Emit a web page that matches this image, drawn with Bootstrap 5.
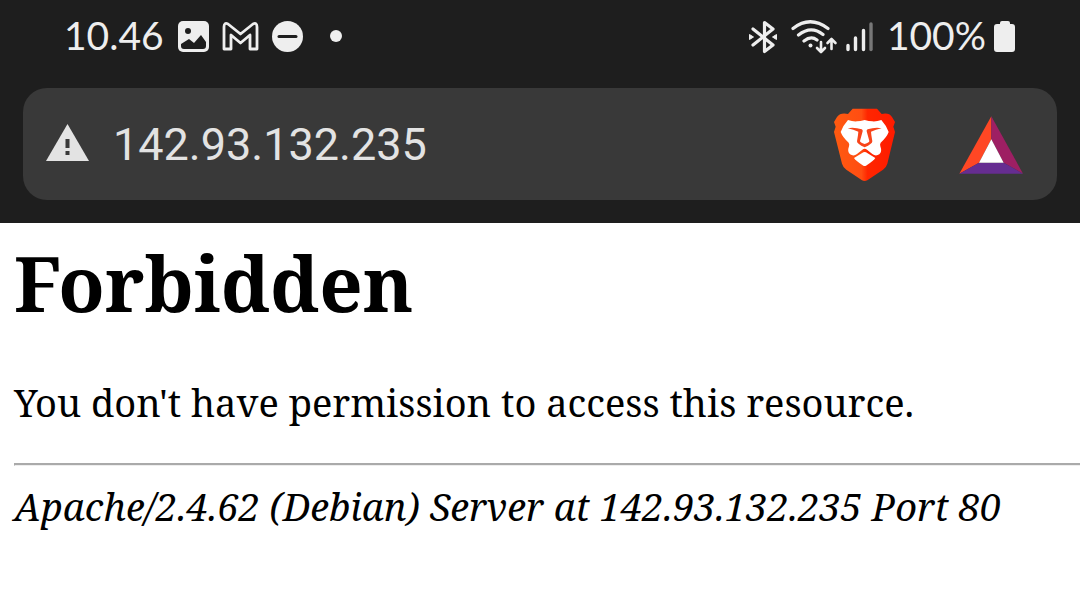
<!DOCTYPE html>
<html lang="en">
<head>
<meta charset="utf-8">
<meta name="viewport" content="width=device-width, initial-scale=1">
<title>403 Forbidden</title>
<link href="https://cdn.jsdelivr.net/npm/bootstrap@5.3.0/dist/css/bootstrap.min.css" rel="stylesheet">
<style>
  .chrome { background: #1e1e1e; padding-bottom: 23px; }
  .status { height: 88px; padding: 0 64px 14px; color: #eee; font: 400 39px/48px Lato, sans-serif; }
  .status svg { display: block; flex: none; }
  .clock { margin-right: 14px; }
  .omnibox { background: #393939; border-radius: 24px; height: 112px; margin: 0 23px; padding: 2px 34px 0 23px; }
  .address { font: 400 45px/56px Roboto, sans-serif; color: #e3e3e3; min-width: 0; margin-left: 23px; }
  .address:focus { outline: 0; }
  .tool { line-height: 0; }
  .tools { gap: 63px; }
  .page { font: 400 38px/52px "Noto Serif", "Droid Serif", "DejaVu Serif Condensed", "DejaVu Serif", serif; color: #000; padding: 8px 0 0 14px; }
  .page h1 { font: inherit; font-weight: 700; font-size: 76px; line-height: 104px; margin: 0 0 41px; }
  .page p { margin: 0 0 35px; }
  .page hr { margin: 0 0 14px; border: 0 solid #aaa; border-width: 2px 0 1px 1px; border-bottom-color: #eee; opacity: 1; height: 3px; }
</style>
</head>
<body class="bg-white">
<header class="chrome">
  <div class="status d-flex align-items-center justify-content-between">
    <div class="d-flex align-items-center">
      <span class="clock pb-1">10.46</span>
      <svg class="me-2" width="36" height="32" viewBox="0 0 36 32" aria-label="Picture"><rect width="31" height="31" rx="5" fill="#eee"/><circle cx="10" cy="10" r="3" fill="#1e1e1e"/><path d="M3 23v2q0 3 3 3h19q3 0 3-3v-4l-5-7-7 8-5-4z" fill="#1e1e1e"/></svg>
      <svg class="me-2" width="42" height="32" viewBox="0 0 42 32" aria-label="Mail" fill="none" stroke="#eee" stroke-width="2.8" stroke-linejoin="round"><path d="M2 28V6Q2 1 6 3L18.500 13 31 3q4-2 4 3v22h-7V14l-9.500 8L9 14v14z"/></svg>
      <svg width="32" height="32" viewBox="0 0 32 32" aria-label="Do not disturb"><circle cx="15.500" cy="15.500" r="15.500" fill="#eee"/><path d="M7 15.500h17" stroke="#1e1e1e" stroke-width="3" stroke-linecap="round"/></svg>
      <svg class="ms-4" width="16" height="32" viewBox="0 0 16 32" aria-hidden="true"><circle cx="8" cy="15" r="6" fill="#eee"/></svg>
    </div>
    <div class="d-flex align-items-center">
      <svg width="42" height="34" viewBox="749 20 42 34" aria-label="Bluetooth"><path d="M753 29l20 16-8.500 6.500V22.500L773 29l-20 16" fill="none" stroke="#eee" stroke-width="3.200" stroke-linecap="round" stroke-linejoin="round"/><path d="M749.500 34.500l4 2.500-4 2.500zM776.500 34.500l-4 2.500 4 2.500z" fill="#eee" stroke="#eee"/></svg>
      <svg width="54" height="34" viewBox="790 20 54 34" aria-label="Wi-Fi" fill="none" stroke="#eee" stroke-width="3.200" stroke-linecap="round" stroke-linejoin="round"><path d="M792 28.500Q809 15 827 28.500M797.500 35Q810 25 822 34.500M803 41Q810 35.500 816 40"/><circle cx="809.500" cy="45.500" r="2" fill="#eee" stroke="none"/><path d="M820 42v9.500m-4-3.500l4 4 4-4M830.500 49V39.500m-4 3.500l4-4 4 4" stroke-width="2.600"/></svg>
      <svg width="42" height="34" viewBox="844 20 42 34" aria-label="Signal" stroke="#eee" stroke-width="3.400" stroke-linecap="round"><path d="M847 45.500v4M854.500 38v11.500M862.500 30.500v19"/><path d="M870 24v25.500" stroke="#777"/></svg>
      <span class="pb-1">100%</span>
      <svg class="ms-2" width="22" height="34" viewBox="995 20 22 34" aria-label="Battery"><path d="M1001 23q0-2 2-2h6q2 0 2 2v1h2q3 0 3 3v22q0 3-3 3h-15q-3 0-3-3V27q0-3 3-3h3z" fill="#eee"/></svg>
    </div>
  </div>
  <form class="omnibox d-flex align-items-center">
    <button type="button" class="tool btn p-0 border-0" aria-label="Not secure"><svg width="44" height="44" viewBox="0 0 44 44"><path d="M21.500 1L43 38H0z" fill="#e3e3e3"/><path d="M19.500 16h4v9h-4zM19.500 28h4v4h-4z" fill="#393939"/></svg></button>
    <input class="address flex-grow-1 bg-transparent border-0 p-0" type="text" value="142.93.132.235" aria-label="Address">
    <div class="tools d-flex align-items-center">
      <button type="button" class="tool btn p-0 border-0" aria-label="Brave Shields">
        <svg width="63" height="74" viewBox="159 86 189 222"><defs><linearGradient id="mane"><stop offset="0" stop-color="#ff5a10"/><stop offset=".45" stop-color="#ff4d12"/><stop offset=".55" stop-color="#ff2600"/><stop offset="1" stop-color="#ff1b00"/></linearGradient></defs>
        <path d="M218 88h73l14 16q22-5 31 9l9 15-5 14 5 16-23 95q-3 11-13 18l-47 32q-8 4-16 0l-47-32q-10-7-13-18l-24-95 5-16-5-14 9-15q10-14 33-9z" fill="url(#mane)"/>
        <path d="M204 122q14 5 27 4 10 0 23-4 13 4 23 4 13 1 27-4 14 15 22 36-6 16-24 32-3 5-1 11 6 16-3 24-11 7-21-1l-16-13q-3-3-7-3t-7 3l-16 13q-10 8-21 1-9-8-3-24 2-6-1-11-18-16-24-32 8-21 22-36z" fill="#fff"/>
        <path d="M203 147q14-3 28 0l14 3q4 1 3 6l-8 29q0 4 14 9 14-5 14-9l-8-29q-1-5 3-6l14-3q14-3 28 0-18 4-32 10l1 10 3 19q0 8-23 18-23-10-23-18l3-19 1-10q-14-6-32-10z" fill="#f8441a"/>
        <path d="M222 236l28-17q4-2 8 0l28 17q-3 7-28 23-4 2-8 0-25-16-28-23z" fill="#fff"/></svg>
      </button>
      <button type="button" class="tool btn p-0 border-0" aria-label="Brave Rewards">
        <svg width="64" height="58" viewBox="537 106 192 174"><path d="M634 107L538 279l59-33 37-70z" fill="#ff4724"/><path d="M634 107l95 172-58-33-37-70z" fill="#9e1f63"/><path d="M538 279h191l-58-33h-74z" fill="#662d91"/><path d="M634 176l-37 70h74z" fill="#fff"/></svg>
      </button>
    </div>
  </form>
</header>
<main class="page">
  <h1>Forbidden</h1>
  <p>You don't have permission to access this resource.</p>
  <hr>
  <address class="mb-0 fst-italic">Apache/2.4.62 (Debian) Server at 142.93.132.235 Port 80</address>
</main>
<script src="https://cdn.jsdelivr.net/npm/bootstrap@5.3.0/dist/js/bootstrap.bundle.min.js"></script>
</body>
</html>
